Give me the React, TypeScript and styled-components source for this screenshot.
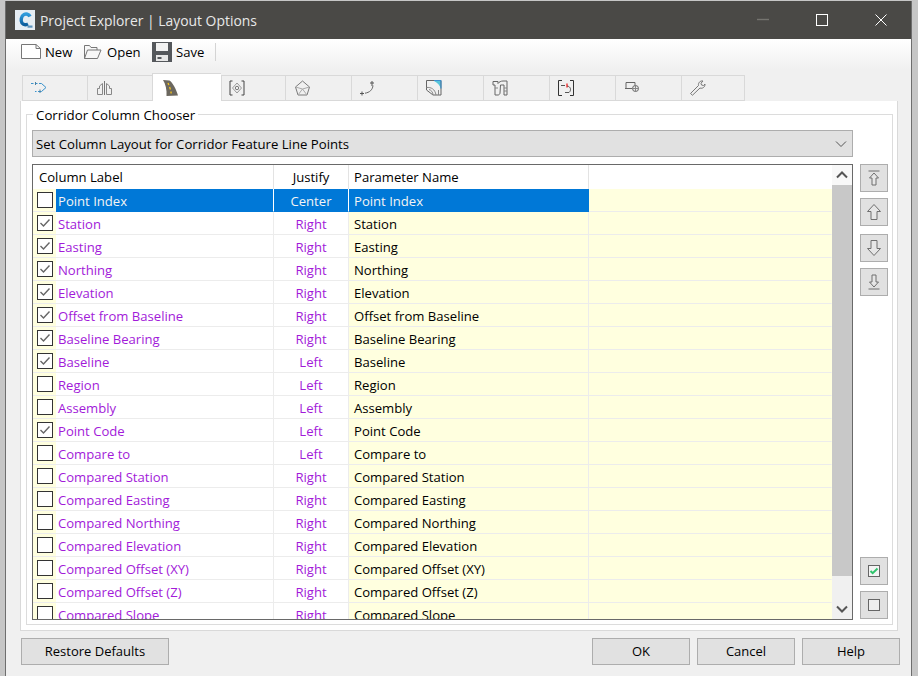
import React from "react";
import styled, { createGlobalStyle } from "styled-components";

const Global = createGlobalStyle`
  html, body { margin: 0; padding: 0; background: #c4c4c4; }
  body { font-family: "Open Sans", "Noto Sans", sans-serif; font-size: 13px; color: #000; }
`;

const Screen = styled.div`
  width: 918px; height: 676px; box-sizing: border-box; overflow: hidden;
  padding: 1px 6px 0 5px; background: #c6c6c6;
`;
const Frame = styled.div`
  height: 675px; display: flex; flex-direction: column; background: #f0f0f0;
  border-left: 1px solid #6e6e6e; border-right: 1px solid #6e6e6e; box-sizing: border-box;
`;
const TitleBar = styled.div`
  height: 38px; flex: none; background: #4a4946; display: flex; align-items: center;
  padding: 0 1px 0 9px; color: #e8e8e8; font-size: 13.9px;
`;
const TitleText = styled.span`margin-left: 5px; flex: 1;`;
const WinBtn = styled.div`width: 59px; height: 38px; display: flex; align-items: center; justify-content: center;`;
const Toolbar = styled.div`
  height: 31px; box-sizing: border-box; flex: none; display: flex; align-items: center; padding: 0 0 6px 15px;
  background: linear-gradient(#ffffff, #f0f0f0);
`;
const ToolItem = styled.div<{ $w: number }>`
  width: ${p => p.$w}px; display: flex; align-items: center; gap: 4px; flex: none; font-size: 13.1px;
`;
const ToolSep = styled.div`width: 1px; height: 18px; background: #d4d4d4; margin-left: 3px;`;
const Tabs = styled.div`
  height: 28px; flex: none; margin-top: 3px; padding-left: 16px; display: flex; align-items: flex-end;
`;
const Tab = styled.div<{ $active?: boolean; $w: number; $pad: number }>`
  width: ${p => p.$w}px; box-sizing: border-box; flex: none; display: flex; align-items: center;
  padding-left: ${p => p.$pad - 1}px;
  height: ${p => (p.$active ? 28 : 26)}px;
  background: ${p => (p.$active ? "#fff" : "#f0f0f0")};
  border: 1px solid #d9d9d9;
  border-right-width: 0;
  border-bottom: ${p => (p.$active ? "0" : "1px solid #d9d9d9")};
  &:last-child { border-right-width: 1px; }
`;
const Panel = styled.div`
  height: 530px; flex: none; margin-left: 14px; width: 878px; box-sizing: border-box;
  background: #fff; border: 1px solid #d9d9d9; border-top: 0; padding: 13px 4px 5px 5px; display: flex;
`;
const GroupBox = styled.div`
  flex: 1; position: relative; border: 1px solid #dcdcdc; padding: 15px 4px 4px 5px; display: flex; flex-direction: column; gap: 7px;
`;
const Legend = styled.div`
  position: absolute; left: 6px; top: -8px; padding: 0 3px; background: #fff; font-size: 13.3px; line-height: 16px;
`;
const Select = styled.div`
  width: 821px; height: 27px; box-sizing: border-box; flex: none; background: #e1e1e1; border: 1px solid #adadad;
  display: flex; align-items: center; justify-content: space-between; padding: 0 5px 0 3px; font-size: 13.18px;
`;
const Content = styled.div`display: flex; gap: 7px; flex: 1; min-height: 0;`;
const List = styled.div`
  width: 821px; height: 456px; box-sizing: border-box; flex: none; border: 1px solid #696969; background: #fff; display: flex; overflow: hidden;
`;
const Rows = styled.div`flex: 1; min-width: 0;`;
const Grid = styled.div<{ $header?: boolean }>`
  display: grid; grid-template-columns: 23px 218px 75px 240px 1fr;
  height: ${p => (p.$header ? 24 : 23)}px; box-sizing: border-box; font-size: 13.1px; line-height: 24px;
`;
const HeadCell = styled.div<{ $center?: boolean; $pad?: number }>`
  border-right: 1px solid #e3e3e3; padding-left: ${p => p.$pad ?? 0}px; text-align: ${p => (p.$center ? "center" : "left")};
  white-space: nowrap;
`;
const HeadWide = styled(HeadCell)`grid-column: span 2;`;
const HeadEnd = styled.div`background: #fff;`;
const CheckCell = styled.div`
  background: #ffffdf; border-bottom: 1px solid #ececec; display: flex; align-items: center; padding-left: 4px;
`;
const Box = styled.div`
  width: 16px; height: 16px; box-sizing: border-box; border: 1px solid #333; background: #fff; display: flex; align-items: center; justify-content: center;
`;
const Cell = styled.div<{ $kind: "label" | "just" | "param" | "end"; $sel?: boolean }>`
  box-sizing: border-box; white-space: nowrap; overflow: hidden;
  border-bottom: 1px solid ${p => (p.$sel && p.$kind !== "end" ? "#0078d7" : "#ececec")};
  border-right: 1px solid ${p => (p.$kind === "end" ? "transparent" : p.$sel ? (p.$kind === "param" ? "#0078d7" : "#fff") : "#ececec")};
  padding-left: ${p => (p.$kind === "label" ? 2 : p.$kind === "param" ? 5 : 0)}px;
  text-align: ${p => (p.$kind === "just" ? "center" : "left")};
  background: ${p => (p.$sel && p.$kind !== "end" ? "#0078d7" : p.$kind === "param" || p.$kind === "end" ? "#ffffdf" : "#fff")};
  color: ${p => (p.$sel && p.$kind !== "end" ? "#f4f4f4" : p.$kind === "param" ? "#000" : "#a21ad9")};
`;
const Scroll = styled.div`width: 20px; flex: none; background: #f0f0f0; display: flex; flex-direction: column;`;
const ScrollBtn = styled.div<{ $top?: boolean }>`
  height: 20px; flex: none; display: flex; align-items: center; justify-content: center; background: ${p => (p.$top ? "#f8f8f8" : "#f0f0f0")};
`;
const Thumb = styled.div`height: 391px; flex: none; background: #c8c8c8;`;
const ScrollGap = styled.div`flex: 1;`;
const Side = styled.div`width: 28px; flex: none; display: flex; flex-direction: column; height: 455px;`;
const SideBtn = styled.div<{ $mt?: number }>`
  width: 28px; height: 28px; box-sizing: border-box; background: #e1e1e1; border: 1px solid #adadad; flex: none;
  margin-top: ${p => p.$mt ?? 0}px; display: flex; align-items: center; justify-content: center;
`;
const Footer = styled.div`height: 27px; margin: 7px 0 0 15px; display: flex; width: 879px; flex: none;`;
const Btn = styled.div<{ $w: number; $ml?: number }>`
  width: ${p => p.$w}px; margin-left: ${p => p.$ml ?? 0}px; height: 27px; box-sizing: border-box; background: #e1e1e1; border: 1px solid #adadad;
  display: flex; align-items: center; justify-content: center; font-size: 13px; padding-bottom: 2px;
`;
const Spacer = styled.div`flex: 1;`;

const rows: [string, string, boolean][] = [
  ["Point Index", "Center", false], ["Station", "Right", true], ["Easting", "Right", true], ["Northing", "Right", true],
  ["Elevation", "Right", true], ["Offset from Baseline", "Right", true], ["Baseline Bearing", "Right", true], ["Baseline", "Left", true],
  ["Region", "Left", false], ["Assembly", "Left", false], ["Point Code", "Left", true], ["Compare to", "Left", false],
  ["Compared Station", "Right", false], ["Compared Easting", "Right", false], ["Compared Northing", "Right", false],
  ["Compared Elevation", "Right", false], ["Compared Offset (XY)", "Right", false], ["Compared Offset (Z)", "Right", false], ["Compared Slope", "Right", false],
];

const G = "#7a7a7a";
const Svg = ({ w = 16, h = 16, children }: { w?: number; h?: number; children: React.ReactNode }) => (
  <svg width={w} height={h} viewBox={`0 0 ${w} ${h}`} fill="none" style={{ display: "block", flex: "none" }}>{children}</svg>
);

const Logo = () => (
  <Svg w={20} h={20}>
    <defs>
      <linearGradient id="cblue" x1="0" y1="0" x2="0" y2="1">
        <stop offset="0" stopColor="#2f9bdc" />
        <stop offset="1" stopColor="#0c5e9e" />
      </linearGradient>
    </defs>
    <rect width="20" height="20" fill="#e6edf3" />
    <path d="M15 6.5 C14 4 11 3.6 9 4.6 C6 6.2 5.5 10.8 7 13 C8.5 15 11 15 13 14" stroke="url(#cblue)" strokeWidth="3.4" />
    <rect x="12.5" y="15.5" width="5" height="2.2" fill="#5c93bd" />
  </Svg>
);

const icons: React.ReactNode[] = [
  <Svg key="0">
    <path d="M0 3.5h2.5M4 3.5h2.5M8 3.5h2.5L15 7.5M0 11.5h0M7 11.5h3.5L15 7.5M4 11.5h1.5" stroke="#3a93cc" />
    <path d="M4.5 2v3M9 9.5v3.5" stroke="#4d7f9e" />
  </Svg>,
  <Svg key="1"><path d="M7.5 1v14" stroke="#777" /><path d="M5.5 3.5L2.5 6v2.5H.5v6h5zM9.5 3.5l3 2.5v2.5h2v6h-5z" stroke="#888" /></Svg>,
  <Svg key="2"><path d="M0 0L6.5.5C10 3 13 9 15 15.5L3.5 16C4 10 2.5 4 0 0z" fill="#6b675e" /><path d="M5 3l.8 2M6.6 7l.8 2.5M7.8 11.5l.5 2" stroke="#f3c21b" strokeWidth="1.3" /></Svg>,
  <Svg key="3"><path d="M3.5 1H1v14h2.5M12.5 1H15v14h-2.5" stroke="#444" /><path d="M8 3L12.5 8 8 13 3.5 8z" stroke="#999" /><circle cx="8" cy="8" r="1.7" stroke={G} /></Svg>,
  <Svg key="4"><path d="M7.5 1L14.5 7l-2.5 8h-9L.5 7z" stroke={G} /><path d="M.5 7l7 2 7-2M7.5 9L3 15M7.5 9l4.5 6" stroke="#aaa" /></Svg>,
  <Svg key="5"><path d="M0 13.5h4M2 11.5v4M12 1v5M10 3h4" stroke="#555" /><path d="M13 5.5C12.5 10 9.5 12.5 5 13.2" stroke="#666" /></Svg>,
  <Svg key="6">
    <path d="M8 1h7v8C14 5.500 11.500 2.500 8 1z" fill="#57c5da" />
    <path d="M.5.5h14.500v14.500H7L.5 10z" stroke="#666" />
    <path d="M.5 7.500C5 7 9 9 10 15M7 15c0-3-2-5-4-5.500M12.500 10v5" stroke="#888" />
    <path d="M8 .5h7v8" stroke="#3a8fd0" />
  </Svg>,
  <Svg key="7"><path d="M1 1.500h5v2C7 2 9 1 11 1h4v14h-3V5H8.500l-.5 8c0 1-1 2-2 2H3V5H1z" stroke="#666" /><path d="M12 8h3M12 11h3M3 8h3" stroke="#888" /></Svg>,
  <Svg key="8"><path d="M4 .5H.5v15H4M12 .5h3.500v15H12" stroke="#333" /><path d="M3 5.500h4M7 12.500h4M9 6c4 .5 4.500 4.500 2 6.500" stroke="#555" /><path d="M9 3.500v4" stroke="#e11" strokeWidth="1.2" /></Svg>,
  <Svg key="9"><path d="M1 2.500h9v3M1 2.500v6M0 8.500h7" stroke="#666" /><circle cx="10.500" cy="8.500" r="3" stroke="#666" /><path d="M10.500 5.500v6M7.500 8.500h6" stroke="#888" /></Svg>,
  <Svg key="10"><path d="M.500 13.500L8.500 5.500C8 3 10 .500 13 1L11 3.200l.5 1.800 2 .5L15 4C15.200 7 12.500 9 10 8L2.500 15.200z" stroke="#777" /></Svg>,
];

const tabSpec: [number, number][] = [
  [65, 9], [65, 10], [69, 11], [64, 8], [66, 10], [66, 9], [66, 9], [66, 9], [66, 9], [66, 10], [64, 9],
];

const Arrow = ({ up, bar }: { up: boolean; bar: boolean }) => (
  <Svg>
    <g transform={up ? undefined : "rotate(180 8 8)"}>
      <path d={bar ? "M8 3L3.500 8H6v7h4V8h2.500z" : "M8 .500L1.500 7.500H5v8h6v-8h3.500z"} stroke="#6f6f6f" fill="#e6e6e6" />
      {bar && <path d="M2.500 1h11" stroke="#6f6f6f" />}
    </g>
  </Svg>
);

const Check = () => (
  <Svg w={14} h={14}><path d="M2.500 7l3 3 6-6.500" stroke="#666" strokeWidth="1.400" /></Svg>
);

export default function App() {
  return (
    <Screen>
      <Global />
      <Frame>
        <TitleBar>
          <Logo />
          <TitleText>Project Explorer | Layout Options</TitleText>
          <WinBtn><Svg w={12} h={12}><path d="M0 5.500h12" stroke="#75746f" strokeWidth="1.400" /></Svg></WinBtn>
          <WinBtn><Svg w={12} h={12}><rect x="0.500" y="0.500" width="11" height="11" stroke="#fff" /></Svg></WinBtn>
          <WinBtn><Svg w={12} h={12}><path d="M0.500 0.500l11 11M11.500 0.500l-11 11" stroke="#fff" /></Svg></WinBtn>
        </TitleBar>
        <Toolbar>
          <ToolItem $w={62}>
            <Svg w={20} h={15}><path d="M.500 .500H15L19.500 4.500v10H.500zM15 .500v4h4.500" stroke="#777" fill="#fff" /></Svg>
            <span>New</span>
          </ToolItem>
          <ToolItem $w={69}>
            <Svg w={20} h={15}><path d="M1.500 14.500V1.500h5L8 3.500h6V6M1.500 14.500L4.500 6h13.500l-3.500 8.500z" stroke="#777" fill="#f8f8f8" /></Svg>
            <span>Open</span>
          </ToolItem>
          <ToolItem $w={60}>
            <Svg w={20} h={20}><path d="M0 0h20v20H0z" fill="#55585c" /><path d="M4 1h12v8H4z" fill="#f2f2f2" /><path d="M4 13h12v6H4z" fill="#e8e8e8" /><path d="M5.500 15h4v2h-4z" fill="#55585c" /></Svg>
            <span>Save</span>
          </ToolItem>
          <ToolSep />
        </Toolbar>
        <Tabs>
          {icons.map((ic, i) => (
            <Tab key={i} $active={i === 2} $w={tabSpec[i][0]} $pad={tabSpec[i][1]}>{ic}</Tab>
          ))}
        </Tabs>
        <Panel>
          <GroupBox>
            <Legend>Corridor Column Chooser</Legend>
            <Select>
              <span>Set Column Layout for Corridor Feature Line Points</span>
              <Svg w={12} h={8}><path d="M1 1.500l5 5 5-5" stroke="#555" /></Svg>
            </Select>
            <Content>
              <List>
                <Rows>
                  <Grid $header>
                    <HeadWide $pad={6}>Column Label</HeadWide>
                    <HeadCell $center>Justify</HeadCell>
                    <HeadCell $pad={5}>Parameter Name</HeadCell>
                    <HeadEnd />
                  </Grid>
                  {rows.map(([label, just, on], i) => (
                    <Grid key={label}>
                      <CheckCell><Box>{on && <Check />}</Box></CheckCell>
                      <Cell $kind="label" $sel={i === 0}>{label}</Cell>
                      <Cell $kind="just" $sel={i === 0}>{just}</Cell>
                      <Cell $kind="param" $sel={i === 0}>{label}</Cell>
                      <Cell $kind="end" $sel={i === 0} />
                    </Grid>
                  ))}
                </Rows>
                <Scroll>
                  <ScrollBtn $top><Svg w={12} h={8}><path d="M1 6.500l5-5 5 5" stroke="#555" strokeWidth="2" /></Svg></ScrollBtn>
                  <Thumb />
                  <ScrollGap />
                  <ScrollBtn><Svg w={12} h={8}><path d="M1 1.500l5 5 5-5" stroke="#555" strokeWidth="2" /></Svg></ScrollBtn>
                </Scroll>
              </List>
              <Side>
                <SideBtn><Arrow up bar /></SideBtn>
                <SideBtn $mt={6}><Arrow up bar={false} /></SideBtn>
                <SideBtn $mt={8}><Arrow up={false} bar={false} /></SideBtn>
                <SideBtn $mt={6}><Arrow up={false} bar /></SideBtn>
                <Spacer />
                <SideBtn><Svg><rect x="2.500" y="2.500" width="11" height="11" stroke="#666" fill="#f4f4f4" /><path d="M4.500 8l2.200 2.200L11.500 5.500" stroke="#2fc46c" strokeWidth="2" /></Svg></SideBtn>
                <SideBtn $mt={6}><Svg><rect x="2.500" y="2.500" width="11" height="11" stroke="#666" fill="#eeeeee" /></Svg></SideBtn>
              </Side>
            </Content>
          </GroupBox>
        </Panel>
        <Footer>
          <Btn $w={148}>Restore Defaults</Btn>
          <Spacer />
          <Btn $w={98}>OK</Btn>
          <Btn $w={98} $ml={7}>Cancel</Btn>
          <Btn $w={98} $ml={7}>Help</Btn>
        </Footer>
      </Frame>
    </Screen>
  );
}
